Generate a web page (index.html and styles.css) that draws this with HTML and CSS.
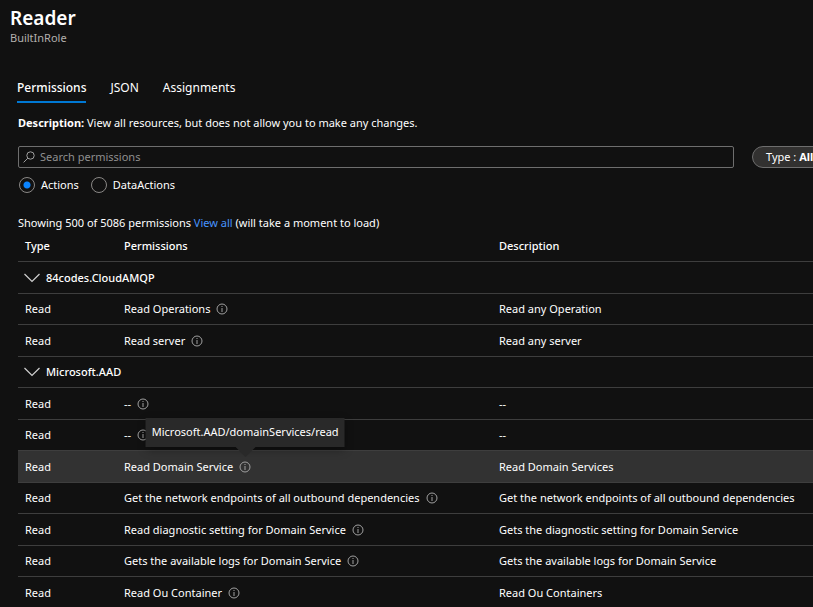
FILE: index.html
```
<!DOCTYPE html>
<html lang="en">
<head>
<meta charset="utf-8">
<title>Reader</title>
<link rel="stylesheet" href="styles.css">
</head>
<body>
<svg class="sprite" aria-hidden="true">
  <symbol id="info" viewBox="0 0 12 12"><circle cx="6" cy="6" r="5" fill="none" stroke="currentColor"/><path d="M6 5v4M6 3v1" stroke="currentColor" fill="none"/></symbol>
  <symbol id="chevron" viewBox="0 0 16 10"><path d="M0.5 1L8 8.5L15.5 1" fill="none" stroke="currentColor" stroke-width="1.2"/></symbol>
</svg>
<header class="head">
  <h1>Reader</h1>
  <p>BuiltInRole</p>
</header>
<nav class="tabs">
  <a class="tab active" href="#permissions">Permissions</a>
  <a class="tab" href="#json">JSON</a>
  <a class="tab" href="#assignments">Assignments</a>
</nav>
<main class="content" id="permissions">
  <p class="description"><b>Description:</b> View all resources, but does not allow you to make any changes.</p>
  <div class="toolbar">
    <label class="search">
      <svg class="glass" viewBox="0 0 12 12" aria-hidden="true"><circle cx="7.5" cy="4.5" r="3.7" fill="none" stroke="currentColor"/><path d="M4.8 7.2L0.6 11.4" stroke="currentColor"/></svg>
      <input type="text" placeholder="Search permissions" aria-label="Search permissions">
    </label>
    <button class="pill" type="button">Type : <b>All</b></button>
  </div>
  <div class="radios">
    <label><input type="radio" name="kind" checked>Actions</label>
    <label><input type="radio" name="kind">DataActions</label>
  </div>
  <p class="count">Showing 500 of 5086 permissions <a href="#all">View all</a> (will take a moment to load)</p>
  <table>
    <thead>
      <tr><th class="type">Type</th><th class="perm">Permissions</th><th>Description</th></tr>
    </thead>
    <tbody>
      <tr class="group"><td colspan="3"><button type="button"><svg class="chevron"><use href="#chevron"/></svg>84codes.CloudAMQP</button></td></tr>
      <tr><td>Read</td><td><span class="name">Read Operations <svg class="info"><use href="#info"/></svg></span></td><td>Read any Operation</td></tr>
      <tr><td>Read</td><td><span class="name">Read server <svg class="info"><use href="#info"/></svg></span></td><td>Read any server</td></tr>
      <tr class="group"><td colspan="3"><button type="button"><svg class="chevron"><use href="#chevron"/></svg>Microsoft.AAD</button></td></tr>
      <tr><td>Read</td><td><span class="name">-- <svg class="info"><use href="#info"/></svg></span></td><td>--</td></tr>
      <tr><td>Read</td><td><span class="name">-- <svg class="info"><use href="#info"/></svg></span></td><td>--</td></tr>
      <tr class="hovered"><td>Read</td><td><span class="name">Read Domain Service <span class="tip-anchor"><svg class="info"><use href="#info"/></svg><span class="tooltip" role="tooltip">Microsoft.AAD/domainServices/read</span></span></span></td><td>Read Domain Services</td></tr>
      <tr><td>Read</td><td><span class="name">Get the network endpoints of all outbound dependencies <svg class="info"><use href="#info"/></svg></span></td><td>Get the network endpoints of all outbound dependencies</td></tr>
      <tr><td>Read</td><td><span class="name">Read diagnostic setting for Domain Service <svg class="info"><use href="#info"/></svg></span></td><td>Gets the diagnostic setting for Domain Service</td></tr>
      <tr><td>Read</td><td><span class="name">Gets the available logs for Domain Service <svg class="info"><use href="#info"/></svg></span></td><td>Gets the available logs for Domain Service</td></tr>
      <tr><td>Read</td><td><span class="name">Read Ou Container <svg class="info"><use href="#info"/></svg></span></td><td>Read Ou Containers</td></tr>
    </tbody>
  </table>
</main>
</body>
</html>
```
FILE: styles.css
```
* { box-sizing: border-box; }
html { background: #111; overflow: hidden; }
body {
  margin: 0;
  color: #fff;
  background: #111;
  font: 11px/16px "Noto Sans", "Open Sans", sans-serif;
}
h1, p { margin: 0; }
button, input { font: inherit; color: inherit; }
.sprite { position: absolute; width: 0; height: 0; }

.head { padding: 6px 10px 0; }
.head h1 { font-size: 19px; line-height: 24px; font-weight: 600; }
.head p { color: #b3b0ad; line-height: 16px; }

.tabs { display: flex; gap: 24px; padding: 30px 17px 0; font-size: 12px; }
.tab { color: #fff; text-decoration: none; line-height: 24px; padding-bottom: 1px; border-bottom: 2px solid transparent; }
.tab.active { border-color: #0078d4; font-weight: 500; }

.content { padding: 12px 0 0 18px; }
.toolbar { display: flex; gap: 18px; margin: 15px -17px 0 0; }
.search { flex: 1; display: flex; align-items: center; gap: 5px; height: 22px; padding: 0 4px; border: 1px solid #6e6e6e; border-radius: 2px; }
.search input { flex: 1; min-width: 0; padding: 0; border: 0; outline: 0; background: none; }
.search input::placeholder { color: #8f8f8f; opacity: 1; }
.glass { width: 12px; height: 12px; color: #a0a0a0; }
.pill { width: 78px; flex: none; height: 22px; padding: 0 13px; text-align: left; white-space: nowrap; border: 1px solid #6e6e6e; border-radius: 11px; background: #323130; }

.radios { display: flex; gap: 11px; margin-top: 8px; }
.radios label { display: flex; align-items: center; gap: 6px; height: 18px; }
.radios input {
  appearance: none;
  width: 16px;
  height: 16px;
  margin: 0 0 0 1px;
  border: 1px solid #8a8886;
  border-radius: 50%;
}
.radios input:checked { background: radial-gradient(circle, #0a84ff 3px, transparent 4px); }

.count { margin-top: 21px; }
.count a { color: #4894fe; text-decoration: none; }

table { width: 100%; table-layout: fixed; border-collapse: separate; border-spacing: 0; }
th, td { padding: 0 7px; text-align: left; white-space: nowrap; border-bottom: 1px solid #3e3e3e; }
th { height: 31px; font-weight: 500; }
.type { width: 99px; }
.perm { width: 375px; }
tbody tr { height: 31px; }
tbody tr:nth-child(odd) { height: 32px; }
.hovered td { background: #323232; }
.group button { display: flex; align-items: center; gap: 6px; padding: 0; border: 0; background: none; font-weight: 500; }
.chevron { width: 16px; height: 10px; margin-left: -1px; color: #d0d0d0; }
.name { display: flex; align-items: center; gap: 6px; }
.info { display: block; width: 12px; height: 12px; color: #a0a0a0; }

.tip-anchor { position: relative; }
.tooltip {
  position: absolute;
  left: 50%;
  bottom: 26px;
  transform: translateX(-50%);
  padding: 6px 6px 7px;
  background: #292929;
  box-shadow: 0 3px 9px rgba(0, 0, 0, 0.3);
}
.tooltip::after {
  content: "";
  position: absolute;
  top: 100%;
  left: 50%;
  margin-left: -10px;
  border: 10px solid transparent;
  border-top-color: #292929;
}
```
